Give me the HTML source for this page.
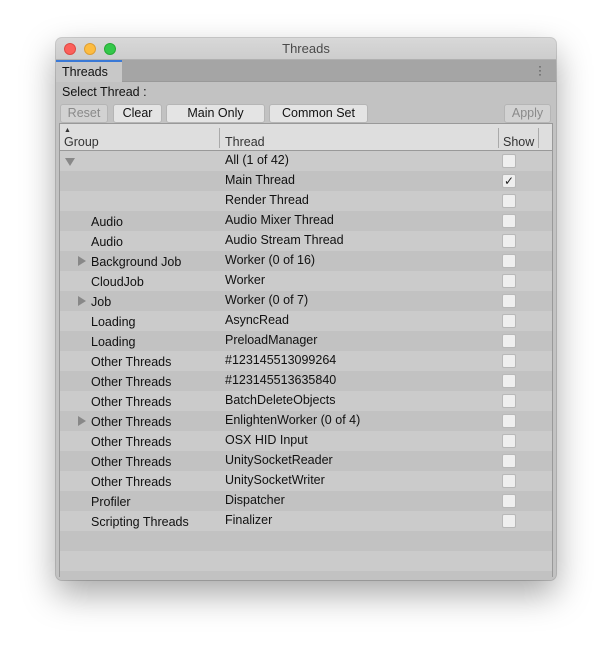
<!DOCTYPE html>
<html><head><style>
*{margin:0;padding:0;box-sizing:border-box}
body{width:612px;height:655px;background:#fff;font-family:"Liberation Sans",sans-serif;font-size:12px;color:#111;position:relative;overflow:hidden}
.win{position:absolute;left:56px;top:38px;width:500px;height:542px;background:#c2c2c2;border-radius:6px;box-shadow:0 14px 34px rgba(0,0,0,.35),0 0 0 1px rgba(0,0,0,.18);overflow:hidden}
.title{height:22px;background:linear-gradient(#d8d8d8,#cdcdcd);text-align:center;line-height:22px;font-size:13px;color:#4a4a4a;border-bottom:1px solid #b0b0b0;position:relative}
.dot{position:absolute;top:5px;width:12px;height:12px;border-radius:50%}
.tabbar{height:22px;background:#a5a5a5;position:relative;border-bottom:1px solid #999}
.tab{position:absolute;left:0;top:0;width:66px;height:22px;background:#c8c8c8;border-top:2px solid #3a79d6;padding-left:6px;line-height:20px;font-size:12.5px}
.menu{position:absolute;right:14px;top:4px;font-size:12px;line-height:4px;color:#444}
.lbl{position:absolute;left:6px;top:47px;font-size:12.5px}
.btn{position:absolute;top:66px;height:19px;background:#e4e4e4;border:1px solid #b5b5b5;border-radius:3px;text-align:center;line-height:17px;font-size:12.5px}
.dis{color:#8a8a8a;background:#d2d2d2}
.table{position:absolute;left:3px;top:85px;width:494px;height:454px;border:1px solid #999;background:#c2c2c2}
.hdr{height:27px;background:#dedede;border-bottom:1px solid #999;position:relative}
.hdr span{position:absolute;top:10px;font-size:12.5px;color:#333}
.sep{position:absolute;top:4px;width:1px;height:20px;background:#aaa}
.row{height:20px;position:relative;font-size:12.5px}
.row:nth-child(odd){background:#cbcbcb}
.row:nth-child(even){background:#c2c2c2}
.g{position:absolute;left:31px;top:4px}
.t{position:absolute;left:165px;top:2px}
.cb{position:absolute;left:442px;top:3px;width:14px;height:14px;background:#efefef;border:1px solid #b8b8b8;border-radius:2px}
.ar{position:absolute;left:18px;top:5px;width:0;height:0;border-left:8px solid #888;border-top:5px solid transparent;border-bottom:5px solid transparent}
</style></head><body>
<div class="win">
<div class="title">Threads
<div class="dot" style="left:8px;background:#fc605b;border:1px solid #de4a44"></div>
<div class="dot" style="left:28px;background:#fdbc40;border:1px solid #de9f34"></div>
<div class="dot" style="left:48px;background:#34c84a;border:1px solid #27aa35"></div>
</div>
<div class="tabbar"><div class="tab">Threads</div><div class="menu">·<br>·<br>·</div></div>
<div class="lbl">Select Thread :</div>
<div class="btn dis" style="left:4px;width:48px">Reset</div>
<div class="btn" style="left:57px;width:49px">Clear</div>
<div class="btn" style="left:110px;width:99px">Main Only</div>
<div class="btn" style="left:213px;width:99px">Common Set</div>
<div class="btn dis" style="left:448px;width:47px">Apply</div>
<div class="table">
<div class="hdr"><span style="left:4px;top:3px;font-size:7px">▲</span><span style="left:4px;top:11px">Group</span><div class="sep" style="left:159px"></div><span style="left:165px;top:11px">Thread</span><div class="sep" style="left:438px"></div><span style="left:443px;top:11px">Show</span><div class="sep" style="left:478px"></div></div>
<div class="rows">
<div class="row"><div style="position:absolute;left:5px;top:7px;border-top:8px solid #888;border-left:5px solid transparent;border-right:5px solid transparent"></div><span class="t">All (1 of 42)</span><div class="cb"></div></div>
<div class="row"><span class="t">Main Thread</span><div class="cb" style="font-size:12px;line-height:12px;text-align:center;color:#222">✓</div></div>
<div class="row"><span class="t">Render Thread</span><div class="cb"></div></div>
<div class="row"><span class="g">Audio</span><span class="t">Audio Mixer Thread</span><div class="cb"></div></div>
<div class="row"><span class="g">Audio</span><span class="t">Audio Stream Thread</span><div class="cb"></div></div>
<div class="row"><div class="ar"></div><span class="g">Background Job</span><span class="t">Worker (0 of 16)</span><div class="cb"></div></div>
<div class="row"><span class="g">CloudJob</span><span class="t">Worker</span><div class="cb"></div></div>
<div class="row"><div class="ar"></div><span class="g">Job</span><span class="t">Worker (0 of 7)</span><div class="cb"></div></div>
<div class="row"><span class="g">Loading</span><span class="t">AsyncRead</span><div class="cb"></div></div>
<div class="row"><span class="g">Loading</span><span class="t">PreloadManager</span><div class="cb"></div></div>
<div class="row"><span class="g">Other Threads</span><span class="t">#123145513099264</span><div class="cb"></div></div>
<div class="row"><span class="g">Other Threads</span><span class="t">#123145513635840</span><div class="cb"></div></div>
<div class="row"><span class="g">Other Threads</span><span class="t">BatchDeleteObjects</span><div class="cb"></div></div>
<div class="row"><div class="ar"></div><span class="g">Other Threads</span><span class="t">EnlightenWorker (0 of 4)</span><div class="cb"></div></div>
<div class="row"><span class="g">Other Threads</span><span class="t">OSX HID Input</span><div class="cb"></div></div>
<div class="row"><span class="g">Other Threads</span><span class="t">UnitySocketReader</span><div class="cb"></div></div>
<div class="row"><span class="g">Other Threads</span><span class="t">UnitySocketWriter</span><div class="cb"></div></div>
<div class="row"><span class="g">Profiler</span><span class="t">Dispatcher</span><div class="cb"></div></div>
<div class="row"><span class="g">Scripting Threads</span><span class="t">Finalizer</span><div class="cb"></div></div>
<div class="row"></div>
<div class="row"></div>
<div class="row" style="height:10px"></div>
</div>
</div>
</div>
</body></html>
